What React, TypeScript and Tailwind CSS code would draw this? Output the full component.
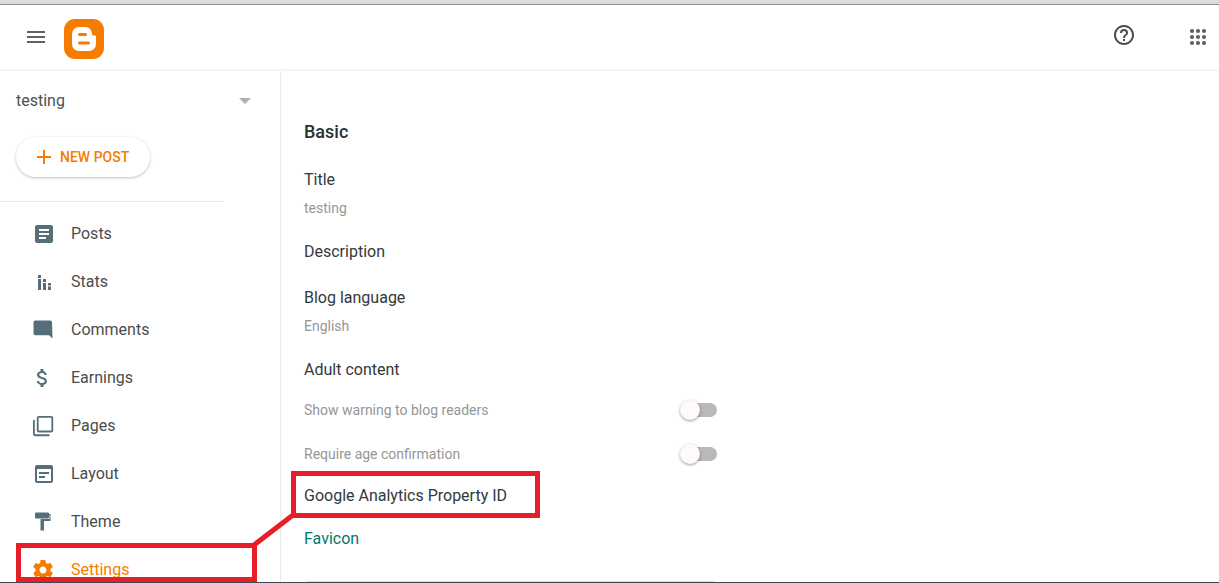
import type { ReactNode } from "react";

const ACCENT = "#f57c00";

function Icon({ children, className = "" }: { children: ReactNode; className?: string }) {
  return (
    <svg viewBox="0 0 24 24" fill="currentColor" className={`size-6 shrink-0 ${className}`} aria-hidden="true">
      {children}
    </svg>
  );
}

const navItems: { label: string; icon: ReactNode; active?: boolean }[] = [
  {
    label: "Posts",
    icon: <path d="M19 3H5a2 2 0 0 0-2 2v14a2 2 0 0 0 2 2h14a2 2 0 0 0 2-2V5a2 2 0 0 0-2-2zm-5 14H7v-2h7v2zm3-4H7v-2h10v2zm0-4H7V7h10v2z" />,
  },
  {
    label: "Stats",
    icon: <path d="M6 5h3v3H6zM6 9h3v11H6zM11 9h3v3h-3zM11 13h3v7h-3zM16 13h3v2.500h-3zM16 16.500h3V20h-3z" />,
  },
  {
    label: "Comments",
    icon: <path d="M20 4a1.800 1.800 0 0 0-1.800-1.500H3.300A1.800 1.800 0 0 0 1.500 4.300V15.500a1.800 1.800 0 0 0 1.800 1.800H17l3.500 3.200z" />,
  },
  {
    label: "Earnings",
    icon: (
      <path
        transform="translate(-1.500 0)"
        d="M11.800 10.900c-2.270-.590-3-1.200-3-2.150 0-1.090 1.010-1.850 2.700-1.850 1.780 0 2.440.850 2.500 2.100h2.210c-.070-1.720-1.120-3.300-3.210-3.810V3h-3v2.160c-1.940.420-3.500 1.680-3.500 3.610 0 2.310 1.910 3.460 4.700 4.130 2.500.600 3 1.480 3 2.410 0 .690-.490 1.790-2.700 1.790-2.060 0-2.870-.920-2.980-2.100h-2.200c.120 2.190 1.760 3.420 3.680 3.830V21h3v-2.150c1.950-.370 3.500-1.500 3.500-3.550 0-2.840-2.430-3.810-4.700-4.400z"
      />
    ),
  },
  {
    label: "Pages",
    icon: (
      <path d="M2.800 6H1v14a2.200 2.200 0 0 0 2.200 2.200H17.500v-1.900H2.800zM19.200 2H6.800a2 2 0 0 0-2 2v12.400a2 2 0 0 0 2 2h12.400a2 2 0 0 0 2-2V4a2 2 0 0 0-2-2zm.200 14.600H6.600V3.800h12.800z" />
    ),
  },
  {
    label: "Layout",
    icon: <path d="M19 3H5a2 2 0 0 0-2 2v14a2 2 0 0 0 2 2h14a2 2 0 0 0 2-2V5a2 2 0 0 0-2-2zm0 16H5V7h14v12zm-2-7H7v-2h10v2zm-4 4H7v-2h6v2z" />,
  },
  {
    label: "Theme",
    icon: <path transform="translate(-0.500 0)" d="M17.500 4V3.500a1 1 0 0 0-1-1h-12a1 1 0 0 0-1 1v4a1 1 0 0 0 1 1h12a1 1 0 0 0 1-1V5.500h.500v3.500H9v11.500h3.500V11H19V4z" />,
  },
  {
    label: "Settings",
    active: true,
    icon: (
      <path
        transform="translate(-1 0)"
        d="M19.430 12.980c.040-.320.070-.640.070-.980s-.030-.660-.070-.980l2.110-1.650c.190-.150.240-.420.120-.640l-2-3.460c-.120-.220-.390-.300-.610-.220l-2.490 1c-.520-.400-1.080-.730-1.690-.980l-.380-2.650A.488.488 0 0 0 14 2h-4c-.250 0-.460.180-.490.420l-.380 2.650c-.610.250-1.170.590-1.690.980l-2.490-1c-.230-.090-.490 0-.610.220l-2 3.460c-.130.220-.070.490.120.640l2.110 1.650c-.040.320-.070.650-.070.980s.030.660.070.980l-2.110 1.650c-.190.150-.240.420-.120.640l2 3.460c.120.220.390.300.610.220l2.490-1c.520.400 1.080.730 1.690.980l.380 2.650c.030.240.240.420.490.420h4c.250 0 .460-.180.490-.420l.380-2.650c.610-.250 1.170-.590 1.690-.980l2.490 1c.230.090.490 0 .610-.220l2-3.460c.120-.220.070-.490-.120-.640l-2.110-1.650zM12 15.500c-1.930 0-3.500-1.570-3.500-3.500s1.570-3.500 3.500-3.500 3.500 1.570 3.500 3.500-1.570 3.500-3.500 3.500z"
      />
    ),
  },
];

function Header() {
  return (
    <header className="flex h-[66px] shrink-0 items-center border-b-2 border-[#f4f4f4] pr-[9px] pl-6">
      <button type="button" aria-label="Main menu" className="pt-0.5 text-[#5f6368]">
        <Icon>
          <path d="M3 5h18v2H3zM3 10h18v2H3zM3 15h18v2H3z" />
        </Icon>
      </button>
      <a href="#home" aria-label="Blogger" className="ml-4 pt-1">
        <svg viewBox="0 0 40 40" className="size-10" aria-hidden="true">
          <rect width="40" height="40" rx="11" fill={ACCENT} />
          <path
            fill="#fff"
            d="M15 8h6.500a6.500 6.500 0 0 1 6.500 6.500v.7c0 .9.500 1.300 1.300 1.300h1.200c.9 0 1.500.6 1.500 1.500V25a7 7 0 0 1-7 7H15a7 7 0 0 1-7-7V15a7 7 0 0 1 7-7z"
          />
          <rect x="14" y="14" width="9" height="3" rx="1.500" fill={ACCENT} />
          <rect x="14" y="22.500" width="12" height="3" rx="1.500" fill={ACCENT} />
        </svg>
      </a>
      <div className="ml-auto flex items-center gap-[50px] text-[#4a4a4a]">
        <button type="button" aria-label="Help" className="pb-1">
          <Icon>
            <path d="M11 18h2v-2h-2v2zm1-16C6.480 2 2 6.480 2 12s4.480 10 10 10 10-4.480 10-10S17.520 2 12 2zm0 18c-4.410 0-8-3.590-8-8s3.590-8 8-8 8 3.590 8 8-3.590 8-8 8zm0-14a4 4 0 0 0-4 4h2a2 2 0 1 1 4 0c0 2-3 1.750-3 5h2c0-2.250 3-2.500 3-5a4 4 0 0 0-4-4z" />
          </Icon>
        </button>
        <button type="button" aria-label="Google apps" className="text-[#5f5f5f]">
          <Icon>
            {[6, 12, 18].map((cy) => [6, 12, 18].map((cx) => <circle key={`${cx}-${cy}`} cx={cx} cy={cy} r="2.100" />))}
          </Icon>
        </button>
      </div>
    </header>
  );
}

function Sidebar() {
  return (
    <aside className="w-[281px] shrink-0 border-r border-[#ebebeb] pt-[18px]">
      <button type="button" className="flex h-6 w-full items-center justify-between pr-[29px] pl-4 text-base text-[#505050]">
        testing
        <svg viewBox="0 0 12 6" className="h-[6px] w-3" fill="#b0b0b0" aria-hidden="true">
          <path d="M0 0h12L6 6z" />
        </svg>
      </button>
      <button
        type="button"
        className="mt-6 ml-4 flex h-10 w-[134px] items-center rounded-full bg-white pl-4 text-sm font-medium text-[#f57c00] shadow-[0_1px_3px_rgba(0,0,0,0.25)]"
      >
        <Icon>
          <path d="M19 13h-6v6h-2v-6H5v-2h6V5h2v6h6z" />
        </Icon>
        <span className="ml-1 whitespace-nowrap">NEW POST</span>
      </button>
      <div className="mt-6 mr-14 h-px bg-[#ebebeb]" />
      <nav className="mt-2">
        <ul>
          {navItems.map(({ label, icon, active }) => (
            <li key={label} className="relative">
              <a
                href={`#${label.toLowerCase()}`}
                aria-current={active ? "page" : undefined}
                className={`flex h-12 items-center gap-[15px] pl-8 text-base ${active ? "text-[#f57c00]" : "text-[#4c4c4c]"}`}
              >
                <Icon className={active ? "text-[#f57c00]" : "text-[#546e7a]"}>{icon}</Icon>
                {label}
              </a>
              {active && <div className="absolute -top-[3px] left-4 h-[39px] w-[241px] border-5 border-[#e61e28]" />}
            </li>
          ))}
        </ul>
      </nav>
    </aside>
  );
}

function Toggle({ id, label }: { id: string; label: string }) {
  return (
    <div className="flex h-11 items-center justify-between">
      <label htmlFor={id} className="text-sm text-[#969696]">
        {label}
      </label>
      <input
        id={id}
        type="checkbox"
        role="switch"
        className="relative h-5 w-[37px] appearance-none before:absolute before:top-[3px] before:right-0 before:h-[14px] before:w-8 before:rounded-full before:bg-[#b9b8ba] after:absolute after:top-0 after:left-0 after:size-5 after:rounded-full after:bg-[#fefafc] after:shadow-[0_1px_3px_rgba(0,0,0,0.4)]"
      />
    </div>
  );
}

function Setting({ title, value }: { title: string; value?: string }) {
  return (
    <div>
      <h3 className="text-base leading-6">{title}</h3>
      {value && <p className="mt-1.5 text-sm leading-5 text-[#969696]">{value}</p>}
    </div>
  );
}

function Settings() {
  return (
    <main className="min-w-0 flex-1 pt-[49px] pl-[23px] text-[#33383c]">
      <section className="w-[413px] max-w-full">
        <h2 className="text-lg leading-6 font-medium text-[#263238]">Basic</h2>
        <div className="mt-6 flex flex-col gap-[22px]">
          <Setting title="Title" value="testing" />
          <Setting title="Description" />
          <Setting title="Blog language" value="English" />
          <Setting title="Adult content" />
        </div>
        <div className="mt-1.5">
          <Toggle id="warning" label="Show warning to blog readers" />
          <Toggle id="age" label="Require age confirmation" />
        </div>
        <div className="relative mt-2">
          <Setting title="Google Analytics Property ID" />
          <div className="absolute -top-[13px] -left-[13px] h-[47px] w-[249px] border-5 border-[#e61e28]" />
          <svg viewBox="0 0 44 36" className="absolute top-[27px] -left-[52px] h-9 w-11" aria-hidden="true">
            <path d="M2 34L41 4" stroke="#e61e28" strokeWidth="5" />
          </svg>
        </div>
        <a href="#favicon" className="mt-[19px] block text-base leading-6 text-[#00796b]">
          Favicon
        </a>
        <div className="mt-[30px] h-16 rounded-sm border border-[#d5dce2]">
          <div className="size-16 rounded-sm bg-black" />
        </div>
      </section>
    </main>
  );
}

export default function App() {
  return (
    <div className="flex h-screen flex-col overflow-hidden border-b border-[#3c4a57] bg-white font-[Roboto,sans-serif]">
      <div className="h-[5px] shrink-0 border-b border-[#8c8c8c] bg-[#dcdcdc]" />
      <Header />
      <div className="flex min-h-0 flex-1">
        <Sidebar />
        <Settings />
      </div>
    </div>
  );
}
